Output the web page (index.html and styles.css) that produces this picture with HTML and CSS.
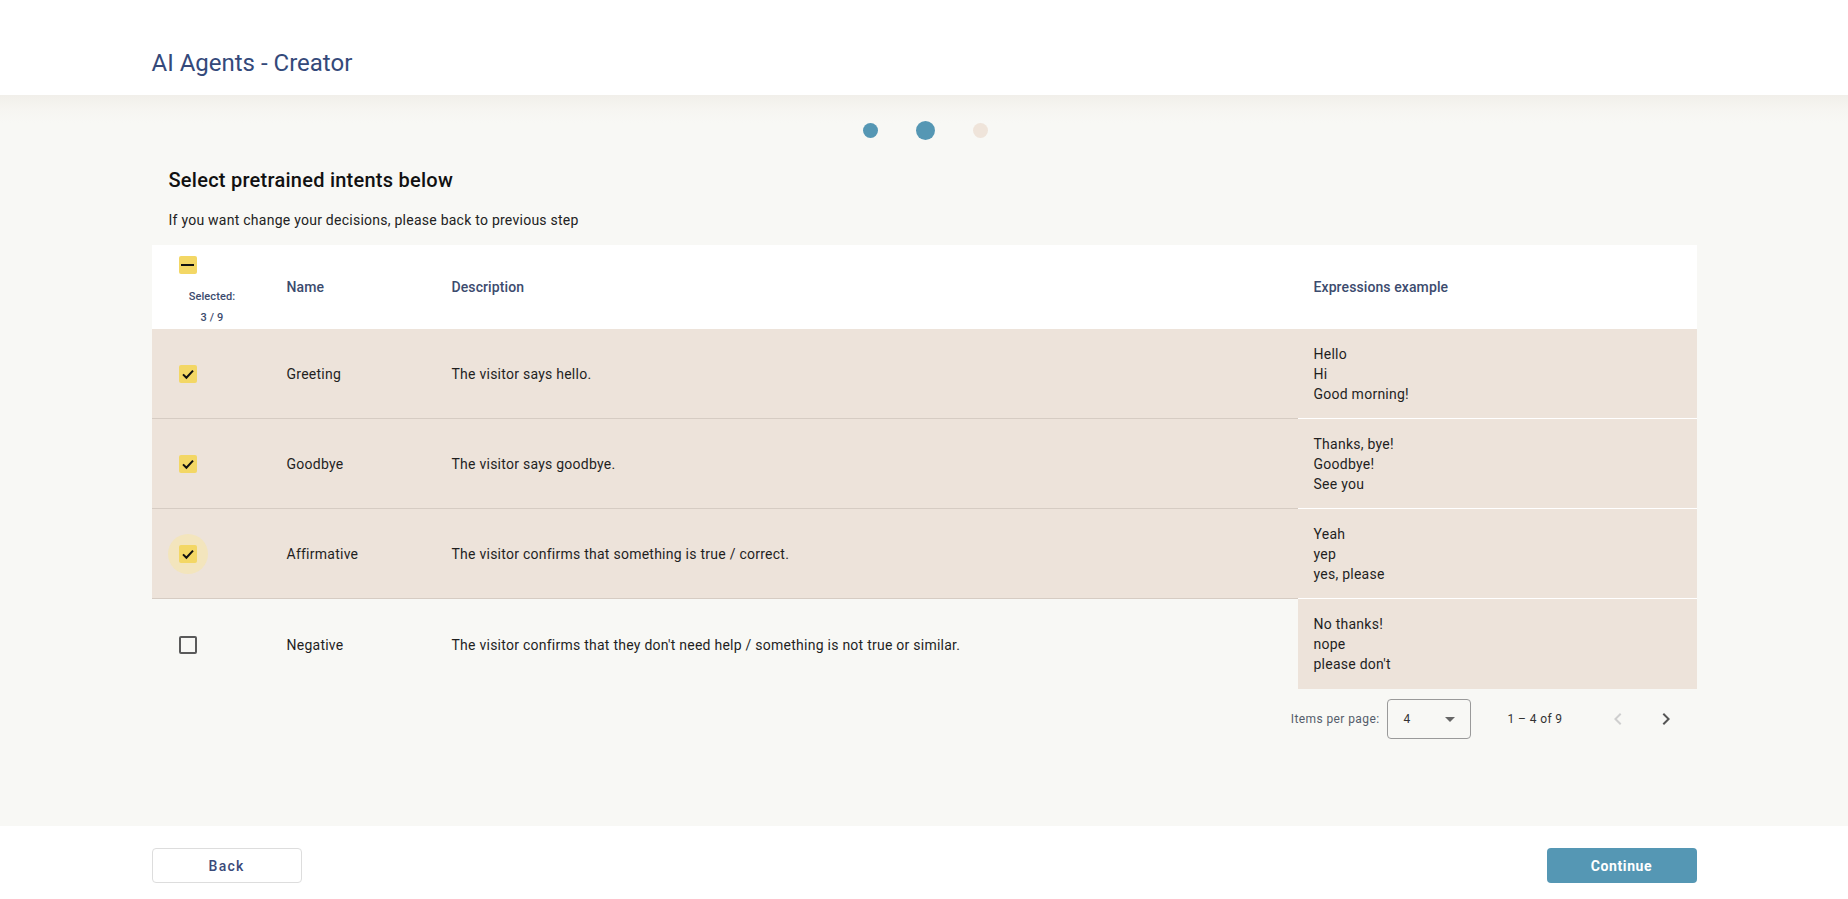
FILE: index.html
```html
<!DOCTYPE html>
<html lang="en">
<head>
<meta charset="utf-8">
<title>AI Agents - Creator</title>
<link rel="stylesheet" href="styles.css">
</head>
<body>
<header class="topbar">
  <div class="container">
    <h1 class="app-title">AI Agents - Creator</h1>
  </div>
</header>

<main class="main">
  <div class="stepper">
    <span class="dot dot-done"></span>
    <span class="dot dot-active"></span>
    <span class="dot dot-todo"></span>
  </div>

  <div class="container">
    <div class="intro">
      <h2 class="heading">Select pretrained intents below</h2>
      <p class="subtext">If you want change your decisions, please back to previous step</p>
    </div>

    <div class="table">
      <div class="row head">
        <div class="cell sel-head">
          <span class="cb-wrap"><span class="cb cb-on"><span class="dash"></span></span></span>
          <span class="sel-label">Selected:</span>
          <span class="sel-label">3 / 9</span>
        </div>
        <div class="cell th">Name</div>
        <div class="cell th">Description</div>
        <div class="cell th expr-head">Expressions example</div>
      </div>

      <div class="row selected">
        <div class="cell cb-cell"><span class="cb-wrap"><span class="cb cb-on"><svg viewBox="0 0 18 18" class="tick"><path d="M4 9.4 L7.4 12.8 L14 5.6"/></svg></span></span></div>
        <div class="cell">Greeting</div>
        <div class="cell">The visitor says hello.</div>
        <div class="cell expr">Hello<br>Hi<br>Good morning!</div>
      </div>

      <div class="row selected">
        <div class="cell cb-cell"><span class="cb-wrap"><span class="cb cb-on"><svg viewBox="0 0 18 18" class="tick"><path d="M4 9.4 L7.4 12.8 L14 5.6"/></svg></span></span></div>
        <div class="cell">Goodbye</div>
        <div class="cell">The visitor says goodbye.</div>
        <div class="cell expr">Thanks, bye!<br>Goodbye!<br>See you</div>
      </div>

      <div class="row selected">
        <div class="cell cb-cell"><span class="cb-wrap focus"><span class="cb cb-on"><svg viewBox="0 0 18 18" class="tick"><path d="M4 9.4 L7.4 12.8 L14 5.6"/></svg></span></span></div>
        <div class="cell">Affirmative</div>
        <div class="cell">The visitor confirms that something is true / correct.</div>
        <div class="cell expr">Yeah<br>yep<br>yes, please</div>
      </div>

      <div class="row last">
        <div class="cell cb-cell"><span class="cb-wrap"><span class="cb cb-off"></span></span></div>
        <div class="cell">Negative</div>
        <div class="cell">The visitor confirms that they don't need help / something is not true or similar.</div>
        <div class="cell expr">No thanks!<br>nope<br>please don't</div>
      </div>
    </div>

    <div class="paginator">
      <span class="pg-label">Items per page:</span>
      <div class="pg-select">
        <span class="pg-value">4</span>
        <span class="pg-arrow"></span>
      </div>
      <span class="pg-range">1 – 4 of 9</span>
      <span class="pg-btn disabled"><svg viewBox="0 0 24 24"><path d="M15.41 7.41L14 6l-6 6 6 6 1.41-1.41L10.83 12z"/></svg></span>
      <span class="pg-btn"><svg viewBox="0 0 24 24"><path d="M10 6L8.59 7.41 13.17 12l-4.58 4.59L10 18l6-6z"/></svg></span>
    </div>
  </div>
</main>

<footer class="footer">
  <div class="container footer-inner">
    <button class="btn btn-back">Back</button>
    <button class="btn btn-continue">Continue</button>
  </div>
</footer>
</body>
</html>
```

FILE: styles.css
```css
* { box-sizing: border-box; }

html, body {
  margin: 0;
  padding: 0;
}

body {
  font-family: Roboto, "Liberation Sans", Arial, sans-serif;
  color: #212121;
  background: #f8f8f5;
  height: 899px;
  display: flex;
  flex-direction: column;
  overflow: hidden;
}

.container {
  width: 1545px;
  margin: 0 auto;
}

/* Header */
.topbar {
  height: 95px;
  background: #ffffff;
  flex: none;
  position: relative;
  z-index: 1;
}
.topbar .container {
  padding-top: 48px;
}
.app-title {
  margin: 0;
  font-size: 24px;
  font-weight: 400;
  color: #34497a;
  line-height: 30px;
}

/* Main */
.main {
  flex: 1;
  background: linear-gradient(#f1efea 0px, #f6f5f1 14px, #f8f8f5 28px);
  padding-top: 26px;
}

.stepper {
  display: flex;
  justify-content: center;
  align-items: center;
  gap: 38px;
  height: 19px;
  padding-left: 3px;
}
.dot {
  display: block;
  border-radius: 50%;
}
.dot-done { width: 15px; height: 15px; background: #5597b4; }
.dot-active { width: 19px; height: 19px; background: #5597b4; }
.dot-todo { width: 15px; height: 15px; background: #efe4da; }

.intro {
  padding-left: 17px;
  padding-top: 28px;
}
.heading {
  margin: 0;
  font-size: 20px;
  font-weight: 500;
  line-height: 24px;
  letter-spacing: 0.25px;
  color: #111111;
}
.subtext {
  margin: 18px 0 15px;
  font-size: 14px;
  line-height: 20px;
  letter-spacing: 0.25px;
  color: #222222;
}

/* Table */
.table {
  font-size: 14px;
  letter-spacing: 0.25px;
}
.row {
  display: grid;
  grid-template-columns: 119px 165px 1fr 399px;
  height: 90px;
}
.row.head {
  background: #ffffff;
  height: 84px;
}
.row.selected {
  background: #ede3da;
}
.cell {
  display: flex;
  align-items: center;
  padding-left: 16px;
  padding-top: 1px;
  color: #1f1f1f;
  line-height: 20px;
}
.row.selected .cell {
  border-bottom: 1px solid #d6ccc3;
}
.th {
  color: #3c4b6e;
  font-weight: 500;
  letter-spacing: 0.1px;
  padding-top: 0;
}
.sel-head {
  flex-direction: column;
  align-items: stretch;
  padding: 0;
}
.sel-head .cb-wrap {
  margin-left: 16px;
}
.sel-label {
  display: block;
  text-align: center;
  font-size: 11px;
  font-weight: 500;
  line-height: 21px;
  letter-spacing: 0.1px;
  color: #3c4b6e;
  position: relative;
  top: 1px;
  left: 1px;
}

.cb-cell {
  padding-left: 16px;
}
.cb-wrap {
  width: 40px;
  height: 40px;
  border-radius: 50%;
  display: flex;
  align-items: center;
  justify-content: center;
  flex: none;
}
.cb-wrap.focus {
  background: #f3e5bd;
}
.cb {
  width: 18px;
  height: 18px;
  border-radius: 2px;
  display: flex;
  align-items: center;
  justify-content: center;
}
.cb-on {
  background: #f3d765;
}
.cb-off {
  border: 2px solid #5a5a5a;
}
.dash {
  width: 13px;
  height: 2px;
  background: #111;
}
.tick {
  width: 18px;
  height: 18px;
}
.tick path {
  fill: none;
  stroke: #111;
  stroke-width: 2;
}

.cell.expr {
  background: #ede3da;
  display: block;
  padding: 15px 16px 14px;
}
.row.selected .cell.expr {
  border-bottom: 1px solid #ffffff;
}

/* Paginator */
.paginator {
  height: 60px;
  display: flex;
  justify-content: flex-end;
  align-items: center;
  padding-right: 11px;
  font-size: 12px;
  letter-spacing: 0.4px;
}
.pg-label {
  color: #555d6b;
  margin-right: 8px;
}
.pg-select {
  width: 84px;
  height: 40px;
  border: 1px solid #9a9a9a;
  border-radius: 4px;
  display: flex;
  align-items: center;
  justify-content: space-between;
  padding: 0 15px 0 15px;
}
.pg-value {
  font-size: 12px;
  color: #333;
}
.pg-arrow {
  width: 0;
  height: 0;
  border-left: 5px solid transparent;
  border-right: 5px solid transparent;
  border-top: 5px solid #666;
}
.pg-range {
  color: #333;
  margin-left: 36px;
  margin-right: 27px;
}
.pg-btn {
  width: 40px;
  height: 40px;
  display: flex;
  align-items: center;
  justify-content: center;
  margin-left: 8px;
}
.pg-btn svg {
  width: 24px;
  height: 24px;
  fill: #555;
}
.pg-btn.disabled svg {
  fill: #cfcfcf;
}

/* Footer */
.footer {
  height: 73px;
  background: #ffffff;
  flex: none;
}
.footer-inner {
  display: flex;
  justify-content: space-between;
  padding-top: 22px;
}
.btn {
  width: 150px;
  height: 35px;
  border-radius: 4px;
  font-family: Roboto, "Liberation Sans", Arial, sans-serif;
  font-size: 14px;
  font-weight: 500;
  letter-spacing: 1.2px;
  cursor: pointer;
}
.btn-back {
  background: #ffffff;
  border: 1px solid #dddddd;
  color: #3b4a7a;
}
.btn-continue {
  background: #5597b4;
  border: none;
  color: #ffffff;
  font-weight: 700;
  letter-spacing: 0.6px;
}
```
